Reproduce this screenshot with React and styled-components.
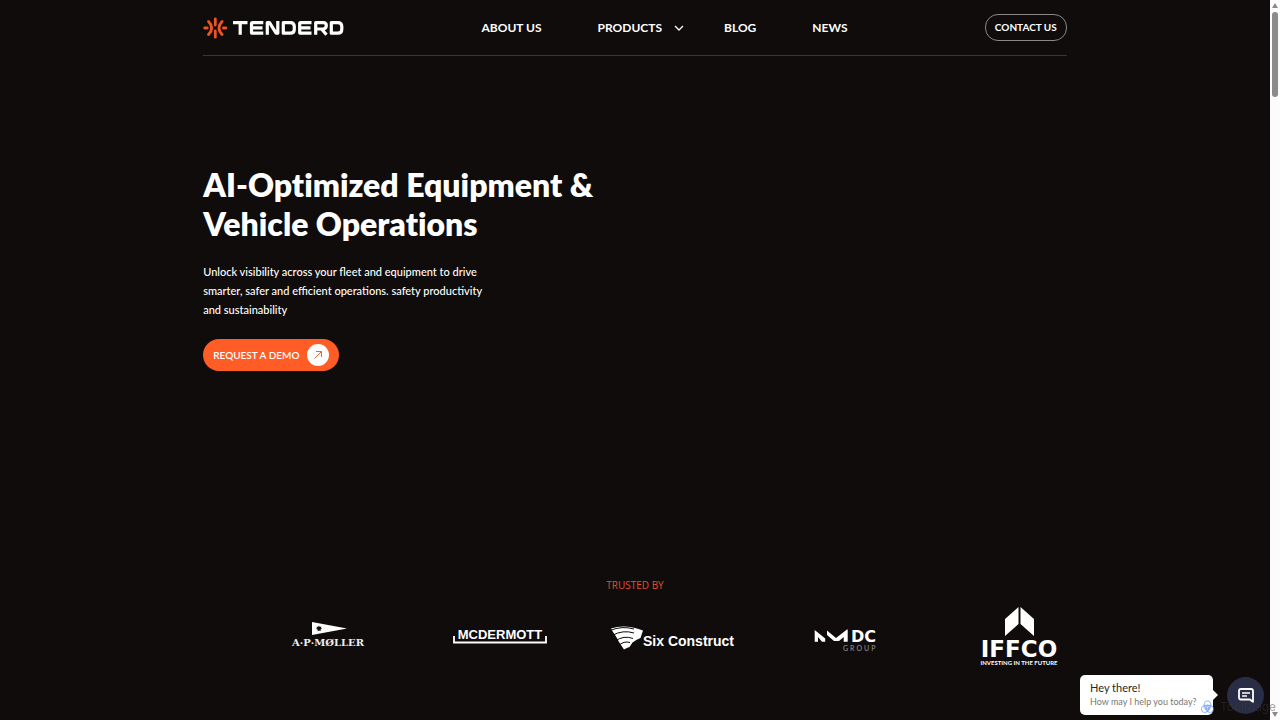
import styled, { createGlobalStyle } from "styled-components";

const GlobalStyle = createGlobalStyle`
  * {
    box-sizing: border-box;
  }

  body {
    margin: 0;
    background: #0f0c0b;
    color: #fff;
    font-family: Lato, "Open Sans", sans-serif;
  }

  h1, p {
    margin: 0;
  }

  a {
    color: inherit;
    text-decoration: none;
  }

  button {
    font-family: inherit;
    cursor: pointer;
  }
`

const Page = styled.div`
  display: grid;
  grid-template-columns: 1fr 10px;
  min-height: 100vh;
`

const Content = styled.div`
  display: flex;
  flex-direction: column;
  min-width: 0;
`

const Header = styled.header`
  display: flex;
  align-items: center;
  justify-content: space-between;
  width: 68%;
  height: 56px;
  margin: 0 auto;
  border-bottom: 1px solid #393635;
`

const LogoLink = styled.a`
  display: flex;
`

const Nav = styled.nav`
  display: flex;
  align-items: center;
  gap: 56px;
`

const NavLink = styled.a`
  font-size: 12px;
  line-height: 20px;
  font-weight: 700;
`

const NavButton = styled.button`
  display: flex;
  align-items: center;
  gap: 12px;
  margin-right: -16px;
  padding: 0;
  border: 0;
  background: none;
  color: inherit;
  font-size: 12px;
  line-height: 20px;
  font-weight: 700;
`

const ContactLink = styled.a`
  padding: 4px 9px;
  border: 1px solid #8b8988;
  border-radius: 13px;
  font-size: 10px;
  line-height: 17px;
  font-weight: 700;
`

const Hero = styled.section`
  display: flex;
  flex-direction: column;
  align-items: flex-start;
  width: 68%;
  margin: 0 auto;
  padding-top: 109px;
`

const Title = styled.h1`
  font-size: 32px;
  line-height: 39px;
  font-weight: 800;
  font-variant-ligatures: none;
`

const Lead = styled.p`
  margin-top: 19px;
  font-size: 11px;
  line-height: 19px;
  font-weight: 500;
`

const DemoButton = styled.button`
  display: flex;
  align-items: center;
  gap: 8px;
  height: 32px;
  margin-top: 20px;
  padding: 0 10px;
  border: 0;
  border-radius: 16px;
  background: #ff5c26;
  color: #fff;
  font-size: 10px;
  font-weight: 600;
`

const Trusted = styled.section`
  margin-top: auto;
  padding-bottom: 54px;
`

const TrustedLabel = styled.p`
  color: #e34f2c;
  font-family: "Open Sans", sans-serif;
  font-size: 10px;
  line-height: 16px;
  text-align: center;
`

const Logos = styled.div`
  display: grid;
  grid-template-columns: repeat(5, 1fr);
  justify-items: center;
  width: 68%;
  margin: 13px 0 0 19%;
`

const Scrollbar = styled.div`
  display: flex;
  flex-direction: column;
  align-items: center;
  justify-content: space-between;
  padding: 3px 0;
  background: #fcfcfc;
`

const Thumb = styled.div`
  flex: none;
  width: 6px;
  height: 85px;
  margin: 4px 0 auto;
  border-radius: 3px;
  background: #8b8b8b;
`

const Chat = styled.aside`
  position: fixed;
  right: 16px;
  bottom: 5px;
  display: flex;
  align-items: center;
  gap: 14px;
`

const Bubble = styled.div`
  position: relative;
  width: 133px;
  padding: 6px 10px;
  border-radius: 5px;
  background: #fff;
  color: #292929;
  font-size: 11px;
  line-height: 14px;

  &::after {
    content: "";
    position: absolute;
    top: 15px;
    left: 100%;
    border: 5px solid transparent;
    border-left-color: #fff;
    border-right: 0;
  }
`

const BubbleHint = styled.p`
  color: #777;
  font-size: 9px;
  line-height: 14px;
  white-space: nowrap;
`

const ChatButton = styled.button`
  display: grid;
  place-items: center;
  width: 37px;
  height: 37px;
  padding: 0;
  border: 0;
  border-radius: 50%;
  background: #292d45;
`

const Watermark = styled.div`
  position: fixed;
  right: 4px;
  bottom: 5px;
  display: flex;
  align-items: center;
  gap: 5px;
  color: rgba(60, 60, 60, 0.45);
  font-family: Inter, sans-serif;
  font-size: 12px;
  line-height: 16px;
  pointer-events: none;
`

function TenderdLogo() {
  return (
    <svg width="141" height="24" viewBox="0 0 141 24" role="img" aria-label="Tenderd">
      <g fill="none" stroke="#ee5522" strokeWidth="2.800" strokeLinecap="round">
        <path d="M12.300 2.800V9M12.300 15v6.200M1.700 12h2.500M20.400 12h2.500M5.500 5.500q6.400 6.500 0 13M19.100 5.500q-6.400 6.500 0 13" />
      </g>
      <g fill="none" stroke="#fff" strokeWidth="3.200" strokeLinejoin="round">
        <path d="M30 6.600h14.500M37.200 6v12.800" />
        <path d="M60.300 6.600H49.500q-1 0-1 1v8.600q0 1 1 1h10.800M49 11.900h10.500" />
        <path d="M64.300 18.800V6.600h2.200l6.600 10.600h1.700V5" />
        <path d="M80.300 6.600h7q4 0 4 4v2.600q0 4-4 4h-7z" />
        <path d="M108.500 6.600H97.700q-1 0-1 1v8.600q0 1 1 1h10.800M97 11.900h10.500" />
        <path d="M112.700 18.800V6.600h7.600q3 0 3 3t-3 3.400h-7M118.500 13l5 5.800" />
        <path d="M128.300 6.600h6.500q4 0 4 4v2.600q0 4-4 4h-6.500z" />
      </g>
    </svg>
  )
}

function MollerLogo() {
  return (
    <svg width="76" height="60" viewBox="0 0 76 60" role="img" aria-label="A.P. Moller">
      <path d="M22 16l35 6.500L22 29z" fill="#fff" />
      <path d="M29 19.500l.8 1.500 1.700-.5-.5 1.500 1 .8-1.500.7.2 1.700-1.500-.8-1.500.8v-1.700l-1.700-.5 1-1-.5-1.500 1.500.5z" fill="#111" />
      <text x="38" y="40" fill="#eee" fontFamily="DejaVu Serif, serif" fontWeight="700" fontSize="10" textAnchor="middle">A·P·MØLLER</text>
    </svg>
  )
}

function McdermottLogo() {
  return (
    <svg width="96" height="60" viewBox="0 0 96 60" role="img" aria-label="McDermott">
      <path d="M2 30v6.500h92V30" fill="none" stroke="#fff" strokeWidth="1.800" />
      <text x="48" y="33" fill="#fff" fontFamily="Liberation Sans, sans-serif" fontWeight="700" fontSize="13" textAnchor="middle">MCDERMOTT</text>
    </svg>
  )
}

function SixConstructLogo() {
  return (
    <svg width="127" height="60" viewBox="0 0 127 60" role="img" aria-label="Six Construct">
      <path d="M1 22.500Q15 17.500 33 24.500L30.500 32Q26 33.500 22.500 36.500L19.500 41Q17 41.500 14 43.500L9 36 6 30.500 3 26z" fill="#fff" />
      <path d="M0 24.500Q12 19.500 24 23M2 29.500Q13 23.500 24 27M5 35Q14 29 23 32.500M8 40Q14 34.500 20 36.500" fill="none" stroke="#0f0c0b" strokeWidth="1" />
      <text x="33" y="40" fill="#fff" fontFamily="Liberation Sans, sans-serif" fontWeight="700" fontSize="14">Six Construct</text>
    </svg>
  )
}

function NmdcLogo() {
  return (
    <svg width="66" height="60" viewBox="0 0 66 60" role="img" aria-label="NMDC Group">
      <path d="M1.700 24l10.500 8.500v3.200H9L5 31v4.700H1.700z" fill="#fff" />
      <path d="M14 24.500l9 7.500L34 23.500h.7v12.200h-4V31L26 35h-5l-7-6z" fill="#fff" />
      <text x="38" y="36" fill="#fff" fontFamily="DejaVu Sans, sans-serif" fontWeight="700" fontSize="16">DC</text>
      <text x="30" y="45" fill="#999" fontFamily="Lato, sans-serif" fontSize="7" letterSpacing="2">GROUP</text>
    </svg>
  )
}

function IffcoLogo() {
  return (
    <svg width="78" height="60" viewBox="0 0 78 60" role="img" aria-label="IFFCO">
      <path d="M38.500 1v17L25 30V13zM40.500 1v17L54 30V13z" fill="#fff" />
      <text x="39" y="51" fill="#fff" fontFamily="DejaVu Sans, sans-serif" fontWeight="700" fontSize="23" textAnchor="middle">IFFCO</text>
      <text x="39" y="59" fill="#fff" fontFamily="Lato, sans-serif" fontWeight="700" fontSize="6" textAnchor="middle">INVESTING IN THE FUTURE</text>
    </svg>
  )
}

function App() {
  return (
    <Page>
      <GlobalStyle />
      <Content>
        <Header>
          <LogoLink href="#home"><TenderdLogo /></LogoLink>
          <Nav>
            <NavLink href="#about">ABOUT US</NavLink>
            <NavButton>
              PRODUCTS
              <svg width="10" height="8" viewBox="0 0 10 8" aria-hidden="true">
                <path d="M1 2l4 4 4-4" fill="none" stroke="#fff" strokeWidth="1.300" />
              </svg>
            </NavButton>
            <NavLink href="#blog">BLOG</NavLink>
            <NavLink href="#news">NEWS</NavLink>
          </Nav>
          <ContactLink href="#contact">CONTACT US</ContactLink>
        </Header>
        <Hero>
          <Title>AI-Optimized Equipment &amp;<br />Vehicle Operations</Title>
          <Lead>
            Unlock visibility across your fleet and equipment to drive<br />
            smarter, safer and efficient operations. safety productivity<br />
            and sustainability
          </Lead>
          <DemoButton>
            REQUEST A DEMO
            <svg width="22" height="22" viewBox="0 0 22 22" aria-hidden="true">
              <circle cx="11" cy="11" r="11" fill="#fff" />
              <path d="M7.500 14.500l7-7M9 7.500h5.500V13" fill="none" stroke="#e8623a" />
            </svg>
          </DemoButton>
        </Hero>
        <Trusted>
          <TrustedLabel>TRUSTED BY</TrustedLabel>
          <Logos>
            <MollerLogo />
            <McdermottLogo />
            <SixConstructLogo />
            <NmdcLogo />
            <IffcoLogo />
          </Logos>
        </Trusted>
      </Content>
      <Scrollbar aria-hidden="true">
        <svg width="6" height="5"><path d="M3 0l3 5H0z" fill="#8b8b8b" /></svg>
        <Thumb />
        <svg width="6" height="5"><path d="M3 5l3-5H0z" fill="#8b8b8b" /></svg>
      </Scrollbar>
      <Chat>
        <Bubble>
          <p>Hey there!</p>
          <BubbleHint>How may I help you today?</BubbleHint>
        </Bubble>
        <ChatButton aria-label="Open chat">
          <svg width="16" height="16" viewBox="0 0 16 16" aria-hidden="true">
            <path d="M3 2h10q2 0 2 2v11l-3-2.500H3q-2 0-2-2V4q0-2 2-2z" fill="none" stroke="#fff" strokeWidth="1.800" strokeLinejoin="round" />
            <path d="M4 6h8M4 9h5" fill="none" stroke="#fff" strokeWidth="1.600" />
          </svg>
        </ChatButton>
      </Chat>
      <Watermark>
        <svg width="15" height="15" viewBox="0 0 15 15" aria-hidden="true">
          <g fill="none" stroke="#5b8def" strokeOpacity="0.600" strokeWidth="1.100">
            <ellipse cx="7.500" cy="4.800" rx="3.400" ry="3.800" />
            <ellipse cx="7.500" cy="4.800" rx="3.400" ry="3.800" transform="rotate(120 7.500 7.500)" />
            <ellipse cx="7.500" cy="4.800" rx="3.400" ry="3.800" transform="rotate(240 7.500 7.500)" />
            <path d="M7.500 4.800l2.400 1.400v2.700l-2.400 1.400-2.400-1.400V6.200z" />
          </g>
        </svg>
        ToolMage
      </Watermark>
    </Page>
  )
}

export default App;
